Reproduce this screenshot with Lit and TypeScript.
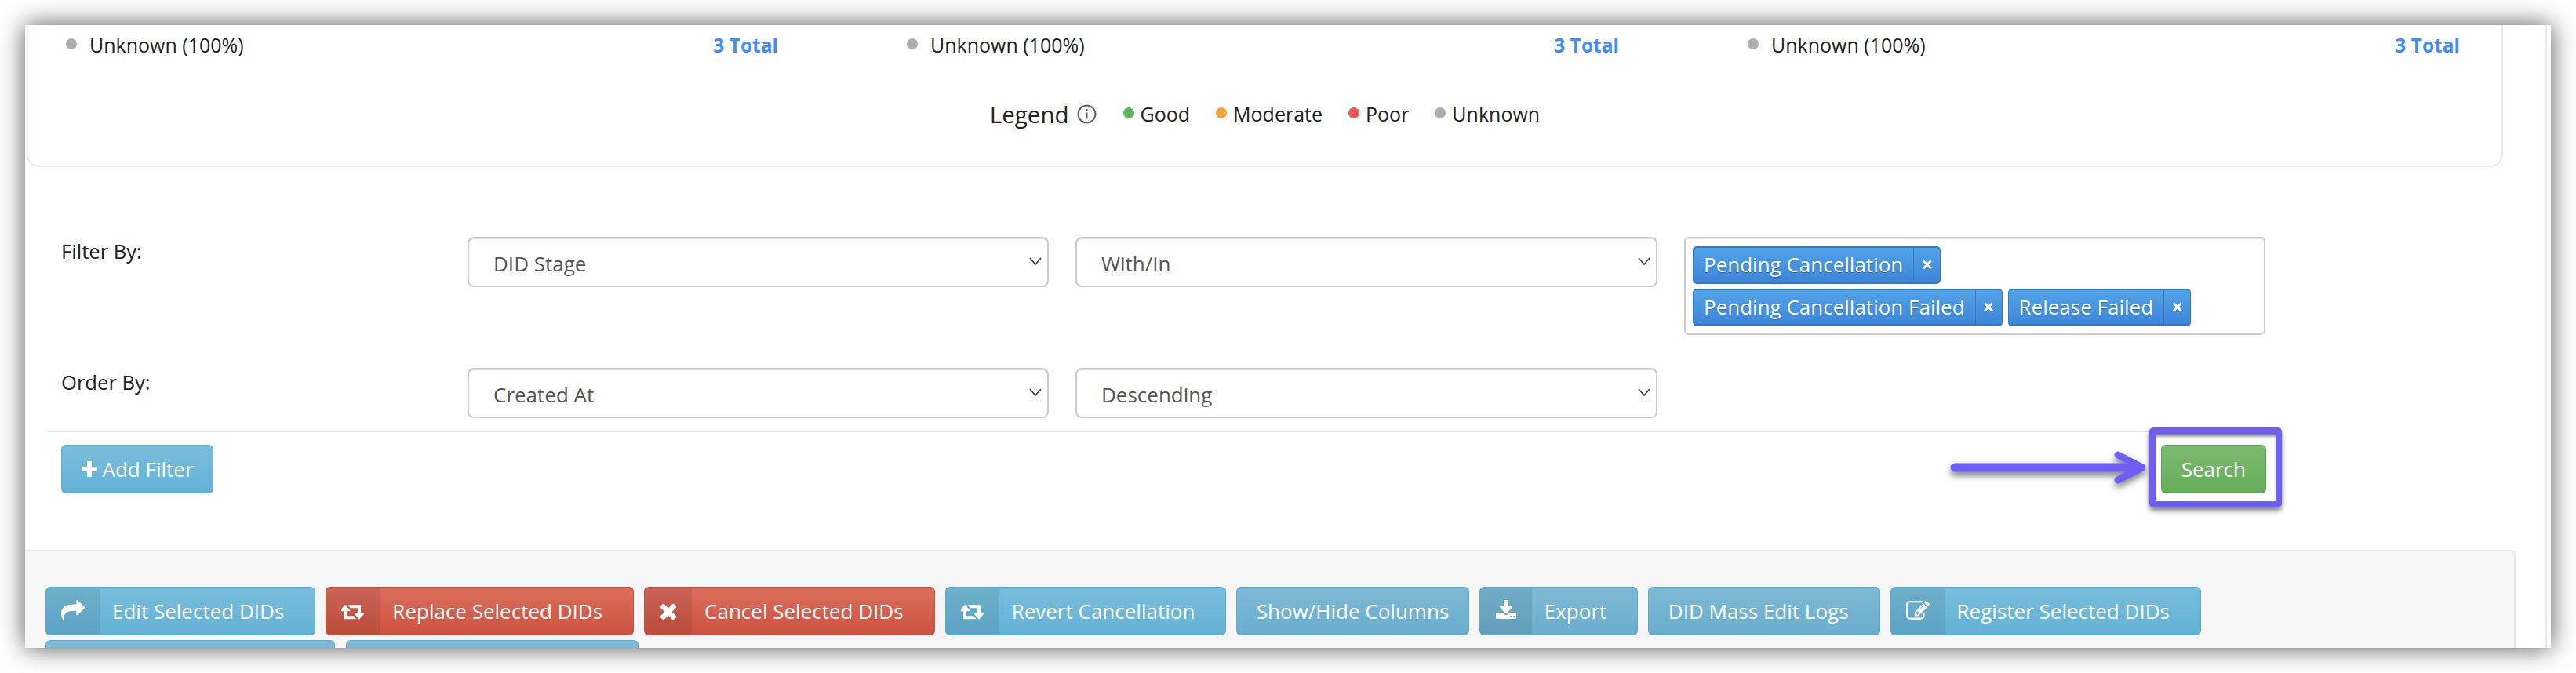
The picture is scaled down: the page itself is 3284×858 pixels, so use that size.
import { LitElement, html, css, svg } from 'lit';
import { customElement } from 'lit/decorators.js';

const icons = {
  share: { box: '0 0 1792 1792', d: 'M1792 640q0 26-19 45l-512 512q-19 19-45 19t-45-19-19-45v-256h-224q-98 0-175.5 6t-154 21.5-133 42.5-105.5 69.5-80 101-48.5 138.5-17.5 181q0 55 5 123 0 6 2.5 23.5t2.5 26.5q0 15-8.5 25t-23.5 10q-16 0-28-17-7-9-13-22t-13.5-30-10.5-24q-127-285-127-451 0-199 53-333 162-403 875-403h224v-256q0-26 19-45t45-19 45 19l512 512q19 19 19 45z' },
  retweet: { box: '0 0 1920 1792', d: 'M1216 1520q0 13-9.5 22.5t-22.5 9.5h-960q-8 0-13.5-2t-9-7-5.5-8-3-11.5-1-11.5v-600h-192q-26 0-45-19t-19-45q0-24 15-41l320-384q19-22 49-22t49 22l320 384q15 17 15 41 0 26-19 45t-45 19h-192v384h576q16 0 25 11l160 192q7 11 7 21zm640-416q0 24-15 41l-320 384q-20 23-49 23t-49-23l-320-384q-15-17-15-41 0-26 19-45t45-19h192v-384h-576q-16 0-25-12l-160-192q-7-9-7-20 0-13 9.5-22.5t22.5-9.5h960q8 0 13.5 2t9 7 5.5 8.5 3 11.5 1 11v600h192q26 0 45 19t19 45z' },
  remove: { box: '300 200 1200 1400', d: 'M1490 1322q0 40-28 68l-136 136q-28 28-68 28t-68-28l-294-294-294 294q-28 28-68 28t-68-28l-136-136q-28-28-28-68t28-68l294-294-294-294q-28-28-28-68t28-68l136-136q28-28 68-28t68 28l294 294 294-294q28-28 68-28t68 28l136 136q28 28 28 68t-28 68l-294 294 294 294q28 28 28 68z' },
  download: { box: '0 0 1792 1792', d: 'M1344 1344q0-26-19-45t-45-19-45 19-19 45 19 45 45 19 45-19 19-45zm256 0q0-26-19-45t-45-19-45 19-19 45 19 45 45 19 45-19 19-45zm128-224v320q0 40-28 68t-68 28h-1472q-40 0-68-28t-28-68v-320q0-40 28-68t68-28h465l135 136q58 56 136 56t136-56l136-136h464q40 0 68 28t28 68zm-325-569q17 41-14 70l-448 448q-18 19-45 19t-45-19l-448-448q-31-29-14-70 17-39 59-39h256v-448q0-26 19-45t45-19h256q26 0 45 19t19 45v448h256q42 0 59 39z' },
  edit: { box: '0 0 1792 1792', d: 'M888 1184l116-116-152-152-116 116v56h96v96h56zm440-720q-16-16-33 1l-350 350q-17 17-1 33t33-1l350-350q17-17 1-33zm80 594v190q0 119-84.5 203.5t-203.5 84.5h-832q-119 0-203.5-84.5t-84.5-203.5v-832q0-119 84.5-203.5t203.5-84.5h832q63 0 117 25 15 7 18 23 3 17-9 29l-49 49q-14 14-32 8-23-6-45-6h-832q-66 0-113 47t-47 113v832q0 66 47 113t113 47h832q66 0 113-47t47-113v-126q0-13 9-22l64-64q15-15 35-7t20 29zm-96-738l288 288-672 672h-288v-288zm444 132l-92 92-288-288 92-92q28-28 68-28t68 28l152 152q28 28 28 68t-28 68z' },
};

type IconName = keyof typeof icons;

const icon = (name: IconName) => html`<svg class="ico ${name}" viewBox=${icons[name].box}>${svg`<path fill="currentColor" fill-rule=${name === 'download' ? 'evenodd' : 'nonzero'} d=${icons[name].d}></path>`}</svg>`;

const chevron = html`<svg class="chev" viewBox="0 0 16 10"><polyline points="1,1 8,9 15,1" fill="none" stroke="#444" stroke-width="1.8"></polyline></svg>`;

@customElement('app-root')
export class AppRoot extends LitElement {
  static styles = css`
    :host {
      display: block;
      height: 858px;
      padding: 32px;
      box-sizing: border-box;
      background: #fff;
      font-family: 'Open Sans', sans-serif;
      font-size: 26px;
      color: #222;
    }
    .window {
      display: flex;
      width: 3220px;
      height: 794px;
      overflow: hidden;
      background: #fff;
      box-shadow: 0 0 30px rgba(0, 0, 0, 0.68);
    }
    .main { width: 3213px; flex: none; }
    .track { flex: 1; background: #fbfbfb; border-left: 2px solid #e8e8e8; }

    .card {
      box-sizing: border-box;
      margin-left: 2px;
      width: 3157px;
      height: 181px;
      border: 2px solid #f1e8e8;
      border-top: none;
      border-radius: 0 0 16px 16px;
      font-size: 25px;
    }
    .stats { display: grid; grid-template-columns: repeat(3, 1072px); padding-left: 48px; }
    .stat { display: flex; align-items: center; height: 50px; width: 908px; }
    .dot { width: 14px; height: 14px; border-radius: 50%; flex: none; }
    .stat .dot { margin-right: 16px; margin-top: -2px; background: #adadad; }
    .stat .total { margin-left: auto; color: #3f8cfb; font-weight: 700; font-size: 24.5px; }
    .legend { display: flex; align-items: center; justify-content: center; height: 50px; margin-top: 38px; }
    .legend .title { font-size: 29.5px; }
    .legend .info { width: 25px; height: 25px; margin: 0 34px 0 10px; }
    .legend .item { display: flex; align-items: center; margin-right: 33px; }
    .legend .item:last-child { margin-right: 0; }
    .legend .dot { margin-right: 8px; margin-top: -2px; }
    .good { background: #5cb85c; }
    .moderate { background: #f0a63c; }
    .poor { background: #ee5a56; }
    .unknown { background: #adadad; }

    .filters {
      display: grid;
      grid-template-columns: 484px 741px 742px 741px;
      gap: 42px 34px;
      margin-top: 89px;
      padding-left: 46px;
    }
    .label { line-height: 38px; font-size: 25.6px; }
    .select {
      box-sizing: border-box;
      display: flex;
      align-items: center;
      justify-content: space-between;
      height: 64px;
      padding: 4px 7px 0 31px;
      border: 2px solid #ccc;
      border-radius: 8px;
      box-shadow: inset 0 1px 1px rgba(0, 0, 0, 0.15);
      color: #555;
    }
    .chev { width: 16px; height: 10px; margin-top: -6px; }
    .tags {
      box-sizing: border-box;
      display: flex;
      flex-direction: column;
      gap: 6px;
      height: 125px;
      padding: 10px 9px;
      border: 2px solid #ccc;
      border-radius: 6px;
      box-shadow: inset 0 1px 1px rgba(0, 0, 0, 0.1);
    }
    .tag-row { display: flex; gap: 7px; }
    .tag {
      box-sizing: border-box;
      display: flex;
      height: 48px;
      border: 1px solid #3a78bd;
      border-top-width: 2px;
      border-bottom-width: 3px;
      border-radius: 5px;
      background: linear-gradient(#50a4e9, #3f85d9);
      color: #fff;
      text-shadow: 0 1px 1px rgba(0, 0, 0, 0.3);
      line-height: 43px;
    }
    .tag .name { padding: 0 13px; border-right: 1px solid #3a78bd; }
    .tag .x { width: 33px; text-align: center; font-weight: 700; }

    .rule { width: 2738px; height: 2px; margin: 16px 0 16px 30px; background: #e5e5e5; }
    .actions { display: flex; justify-content: space-between; width: 2811px; margin-left: 46px; }
    .search-wrap { position: relative; display: flex; }
    .highlight {
      position: absolute;
      inset: -22px -20px -18px -15px;
      border: 8px solid #6f5ef5;
      border-radius: 5px;
      box-shadow: 0 4px 6px rgba(0, 0, 0, 0.5), inset 0 5px 4px -2px rgba(0, 0, 0, 0.55);
    }
    .arrow {
      position: absolute;
      left: -269px;
      top: 8px;
      width: 252px;
      height: 42px;
      overflow: visible;
      filter: drop-shadow(0 5px 4px rgba(0, 0, 0, 0.5));
    }

    .btn {
      box-sizing: border-box;
      display: flex;
      align-items: stretch;
      height: 62px;
      border: 1px solid #5bacd0;
      border-bottom-width: 2px;
      border-radius: 6px;
      background: linear-gradient(#79bedb, #64b2d7);
      color: #fff;
      line-height: 60px;
      white-space: nowrap;
    }
    .btn.plain { padding: 0 24.5px; }
    .btn.long { padding-right: 39px; }
    .btn.danger { border-color: #c9503e; background: linear-gradient(#da6e5e, #cd5340); }
    .btn.success { border-color: #5f9f52; background: linear-gradient(#7cbb72, #67ad59); padding: 0 25px; }
    .btn.muted { border-color: #64a9cb; background: linear-gradient(#7dbad7, #6badcd); }
    .btn .side { display: flex; align-items: center; padding: 0 19px; background: rgba(0, 0, 0, 0.08); }
    .btn .text { padding: 0 39px 0 16px; }
    .ico { display: block; height: 28px; }
    .ico.share { width: 30px; height: 30px; }
    .ico.retweet { width: 30px; height: 28px; }
    .ico.remove { width: 22px; height: 24px; }
    .ico.download { width: 28px; height: 28px; }
    .ico.edit { width: 30px; height: 30px; }
    .plus { width: 20px; height: 20px; margin-right: 7px; align-self: center; }
    .w369 { width: 369px; }
    .w373 { width: 373px; margin-left: 1px; }

    .panel {
      box-sizing: border-box;
      width: 3175px;
      height: 300px;
      margin-top: 72px;
      padding: 45px 0 0 26px;
      background: #f6f6f6;
      border-top: 2px solid #e8e8e8;
      border-right: 2px solid #e8e8e8;
      border-top-right-radius: 6px;
    }
    .btns { display: flex; flex-wrap: wrap; gap: 6px 13px; width: 2800px; }
  `;

  private stat() {
    return html`<div class="stat"><span class="dot"></span><span>Unknown (100%)</span><span class="total">3 Total</span></div>`;
  }

  private btn(label: string, name?: IconName, cls = '') {
    if (!name) return html`<div class="btn plain ${cls}">${label}</div>`;
    return html`<div class="btn ${cls}"><span class="side">${icon(name)}</span><span class="text">${label}</span></div>`;
  }

  private tag(label: string) {
    return html`<div class="tag"><span class="name">${label}</span><span class="x">×</span></div>`;
  }

  render() {
    return html`
      <div class="window">
        <div class="main">
          <section class="card">
            <div class="stats">${this.stat()}${this.stat()}${this.stat()}</div>
            <div class="legend">
              <span class="title">Legend</span>
              <svg class="info" viewBox="0 0 25 25">
                <circle cx="12.5" cy="12.5" r="11" fill="none" stroke="#666" stroke-width="2"></circle>
                <circle cx="12.5" cy="7.5" r="1.4" fill="#666"></circle>
                <rect x="11.6" y="10.5" width="1.9" height="8" fill="#666"></rect>
              </svg>
              <span class="item"><span class="dot good"></span>Good</span>
              <span class="item"><span class="dot moderate"></span>Moderate</span>
              <span class="item"><span class="dot poor"></span>Poor</span>
              <span class="item"><span class="dot unknown"></span>Unknown</span>
            </div>
          </section>

          <section class="filters">
            <div class="label">Filter By:</div>
            <div class="select">DID Stage ${chevron}</div>
            <div class="select">With/In ${chevron}</div>
            <div class="tags">
              <div class="tag-row">${this.tag('Pending Cancellation')}</div>
              <div class="tag-row">${this.tag('Pending Cancellation Failed')}${this.tag('Release Failed')}</div>
            </div>
            <div class="label">Order By:</div>
            <div class="select">Created At ${chevron}</div>
            <div class="select">Descending ${chevron}</div>
          </section>

          <div class="rule"></div>
          <div class="actions">
            <div class="btn plain">
              <svg class="plus" viewBox="0 0 20 20"><path fill="#fff" d="M7 0h6v7h7v6h-7v7H7v-7H0V7h7z"></path></svg>
              Add Filter
            </div>
            <div class="search-wrap">
              <svg class="arrow" viewBox="0 0 252 42">
                <path fill="none" stroke="#6f5ef5" stroke-width="11" stroke-linecap="round" d="M6 21H240"></path>
                <path fill="none" stroke="#6f5ef5" stroke-width="9" stroke-linecap="round" stroke-linejoin="round" d="M214 5L245 21L214 37"></path>
              </svg>
              <div class="btn success">Search</div>
              <span class="highlight"></span>
            </div>
          </div>

          <section class="panel">
            <div class="btns">
              ${this.btn('Edit Selected DIDs', 'share')}
              ${this.btn('Replace Selected DIDs', 'retweet', 'danger')}
              ${this.btn('Cancel Selected DIDs', 'remove', 'danger')}
              ${this.btn('Revert Cancellation', 'retweet')}
              ${this.btn('Show/Hide Columns', undefined, 'muted')}
              ${this.btn('Export', 'download', 'muted')}
              ${this.btn('DID Mass Edit Logs', undefined, 'muted long')}
              ${this.btn('Register Selected DIDs', 'edit')}
              <div class="btn muted w369"></div>
              <div class="btn muted w373"></div>
            </div>
          </section>
        </div>
        <div class="track"></div>
      </div>
    `;
  }
}
